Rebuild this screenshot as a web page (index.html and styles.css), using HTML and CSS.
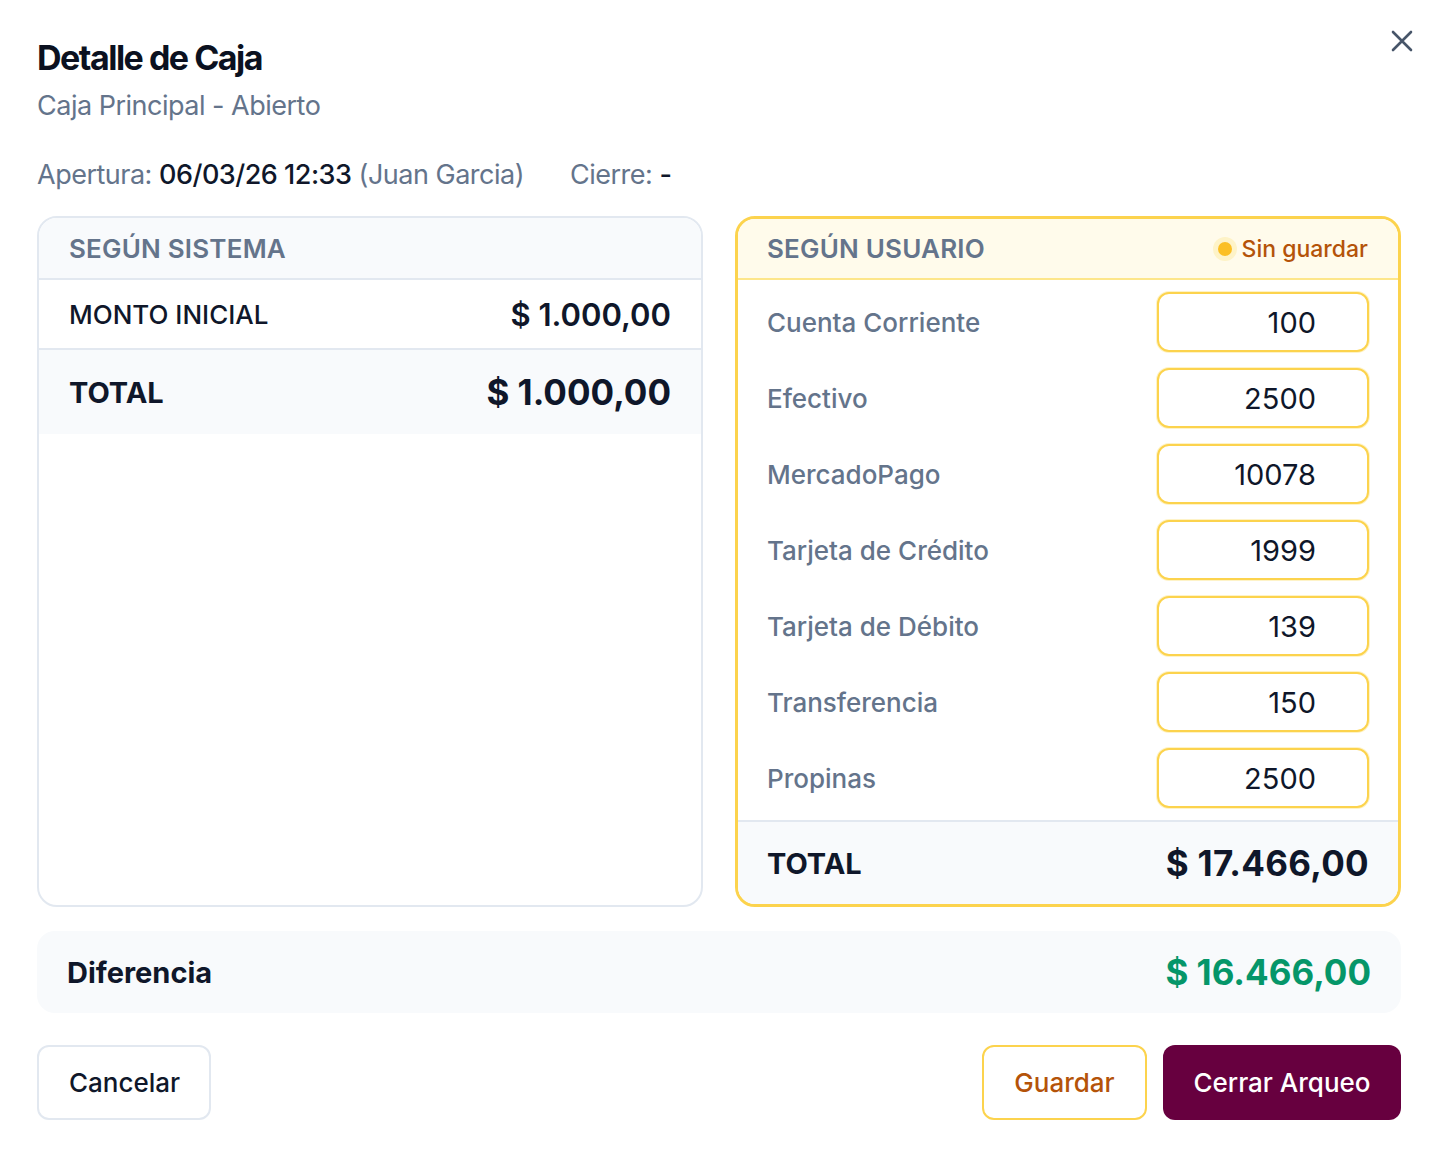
FILE: index.html
```html
<!DOCTYPE html>
<html lang="es">
<head>
<meta charset="utf-8">
<title>Detalle de Caja</title>
<link rel="stylesheet" href="styles.css">
</head>
<body>
<div class="modal">
  <button class="close" aria-label="Cerrar">
    <svg width="22" height="22" viewBox="0 0 22 22" fill="none" stroke="#475569" stroke-width="2.6" stroke-linecap="round"><path d="M2 2L20 20M20 2L2 20"/></svg>
  </button>
  <h1 class="title">Detalle de Caja</h1>
  <p class="subtitle">Caja Principal - Abierto</p>
  <div class="meta">
    <span>Apertura: <strong>06/03/26 12:33</strong> (Juan Garcia)</span>
    <span>Cierre: <strong>-</strong></span>
  </div>
  <div class="grid">
    <section class="card card-system">
      <div class="card-head">SEGÚN SISTEMA</div>
      <div class="sys-row"><span>MONTO INICIAL</span><span class="sys-val">$ 1.000,00</span></div>
      <div class="total-row total-sys"><span>TOTAL</span><span class="total-val">$ 1.000,00</span></div>
    </section>
    <section class="card card-user">
      <div class="card-head head-user">
        <span>SEGÚN USUARIO</span>
        <span class="unsaved"><span class="dot"></span>Sin guardar</span>
      </div>
      <div class="user-rows">
        <div class="user-row"><span>Cuenta Corriente</span><div class="amount">100</div></div>
        <div class="user-row"><span>Efectivo</span><div class="amount">2500</div></div>
        <div class="user-row"><span>MercadoPago</span><div class="amount">10078</div></div>
        <div class="user-row"><span>Tarjeta de Crédito</span><div class="amount">1999</div></div>
        <div class="user-row"><span>Tarjeta de Débito</span><div class="amount">139</div></div>
        <div class="user-row"><span>Transferencia</span><div class="amount">150</div></div>
        <div class="user-row"><span>Propinas</span><div class="amount">2500</div></div>
      </div>
      <div class="total-row total-user"><span>TOTAL</span><span class="total-val">$ 17.466,00</span></div>
    </section>
  </div>
  <div class="diff">
    <span>Diferencia</span>
    <span class="diff-val">$ 16.466,00</span>
  </div>
  <div class="actions">
    <button class="btn btn-cancel">Cancelar</button>
    <div class="actions-right">
      <button class="btn btn-save">Guardar</button>
      <button class="btn btn-close">Cerrar Arqueo</button>
    </div>
  </div>
</div>
</body>
</html>
```
FILE: styles.css
```css
* { box-sizing: border-box; }
html, body { margin: 0; padding: 0; background: #ffffff; }
body {
  font-family: Inter, "Noto Sans", "Liberation Sans", sans-serif;
  color: #0f172a;
}
.modal {
  position: relative;
  width: 1440px;
  height: 1152px;
  padding: 36px 39px 0 37px;
}
.close {
  position: absolute;
  top: 30px;
  left: 1391px;
  background: none;
  border: 0;
  padding: 0;
  width: 22px;
  height: 22px;
  cursor: pointer;
}
.title {
  margin: 0;
  font-size: 34px;
  line-height: 44px;
  font-weight: 700;
  letter-spacing: -1.5px;
  color: #0b1120;
}
.subtitle {
  margin: 8px 0 0;
  font-size: 27px;
  line-height: 36px;
  letter-spacing: -0.5px;
  color: #64748b;
}
.meta {
  margin-top: 33px;
  display: flex;
  gap: 46px;
  font-size: 27px;
  line-height: 36px;
  letter-spacing: -0.5px;
  color: #64748b;
}
.meta strong { font-weight: 500; color: #0f172a; }
.grid {
  margin-top: 23px;
  display: grid;
  grid-template-columns: 1fr 1fr;
  gap: 32px;
}
.card {
  height: 691px;
  border-radius: 20px;
  overflow: hidden;
  display: flex;
  flex-direction: column;
}
.card-system { border: 2px solid #e2e8f0; }
.card-user { border: 3px solid #fcd34d; }
.card-head {
  height: 62px;
  display: flex;
  align-items: center;
  justify-content: space-between;
  padding: 0 30px;
  background: #f8fafc;
  border-bottom: 2px solid #e2e8f0;
  font-size: 26px;
  font-weight: 600;
  color: #64748b;
  letter-spacing: 0.2px;
}
.head-user {
  height: 61px;
  background: #fffbeb;
  border-bottom: 2px solid #fde68a;
  padding: 0 30px 0 29px;
}
.unsaved {
  display: flex;
  align-items: center;
  gap: 10px;
  font-size: 23px;
  font-weight: 500;
  color: #b45309;
  letter-spacing: 0;
}
.dot {
  width: 14px;
  height: 14px;
  border-radius: 50%;
  background: #fbbf24;
  box-shadow: 0 0 0 5px #fef3c7;
}
.sys-row {
  height: 70px;
  display: flex;
  align-items: center;
  justify-content: space-between;
  padding: 0 30px;
  border-bottom: 2px solid #e2e8f0;
  font-size: 26px;
  font-weight: 500;
}
.sys-val { font-size: 31px; font-weight: 600; }
.total-row {
  display: flex;
  align-items: center;
  justify-content: space-between;
  padding: 0 30px;
  background: #f8fafc;
  font-size: 29px;
  font-weight: 700;
}
.total-sys { height: 84px; }
.total-val { font-size: 35px; font-weight: 700; }
.user-rows {
  flex: 1;
  padding: 12px 29px 0 29px;
  display: flex;
  flex-direction: column;
  gap: 16px;
  border-bottom: 2px solid #e2e8f0;
}
.user-row {
  height: 60px;
  display: flex;
  align-items: center;
  justify-content: space-between;
  font-size: 26px;
  font-weight: 500;
  color: #64748b;
}
.amount {
  width: 212px;
  height: 60px;
  border: 2px solid #fcd34d;
  border-radius: 12px;
  display: flex;
  align-items: center;
  justify-content: flex-end;
  padding-right: 51px;
  font-size: 29px;
  font-weight: 400;
  color: #0f172a;
  background: #fff;
  box-shadow: 0 0 0 1px #fef3c7;
}
.total-user { height: 82px; padding: 0 29px; }
.total-user .total-val { letter-spacing: 0.3px; }
.diff {
  margin-top: 24px;
  height: 82px;
  border-radius: 18px;
  background: #f8fafc;
  display: flex;
  align-items: center;
  justify-content: space-between;
  padding: 0 30px;
  font-size: 29px;
  font-weight: 700;
}
.diff-val { font-size: 35px; color: #059669; }
.actions {
  margin-top: 32px;
  display: flex;
  justify-content: space-between;
}
.actions-right { display: flex; gap: 16px; }
.btn {
  height: 75px;
  border-radius: 12px;
  font-family: inherit;
  font-size: 26px;
  font-weight: 500;
  padding: 0 30px;
  cursor: pointer;
  background: #fff;
}
.btn-cancel {
  width: 174px;
  border: 2px solid #e2e8f0;
  color: #0f172a;
}
.btn-save {
  width: 165px;
  border: 2px solid #fcd34d;
  color: #b45309;
}
.btn-close {
  width: 238px;
  border: 0;
  background: #67003f;
  color: #ffffff;
}
```
